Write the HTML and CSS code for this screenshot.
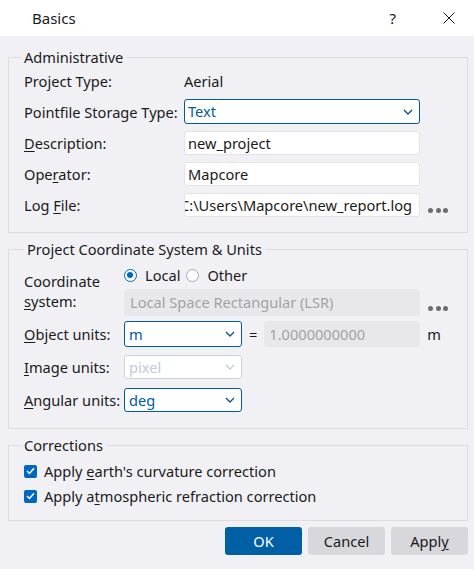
FILE: index.html
```html
<!DOCTYPE html>
<html>
<head>
<meta charset="utf-8">
<link rel="stylesheet" href="styles.css">
</head>
<body>
<div class="dialog">
  <div class="titlebar">
    <span class="title">Basics</span>
    <span class="help">?</span>
    <svg class="close" width="12" height="12" viewBox="0 0 12 12"><path d="M0.5 0.5 L11.5 11.5 M11.5 0.5 L0.5 11.5" stroke="#1a1a1a" stroke-width="1" fill="none"/></svg>
  </div>
  <div class="content">
    <fieldset class="group g1">
      <legend>Administrative</legend>
      <div class="grid1">
        <div class="label first">Project Type:</div>
        <div class="value first">Aerial</div>
        <div></div>

        <div class="label">Pointfile Storage Type:</div>
        <div class="combo"><span>Text</span><svg class="chev" width="10" height="6" viewBox="0 0 10 6"><path d="M1 1 L5 5 L9 1" stroke="#1d4f86" stroke-width="1.4" fill="none"/></svg></div>
        <div></div>

        <div class="label"><u>D</u>escription:</div>
        <div class="field">new_project</div>
        <div></div>

        <div class="label">Ope<u>r</u>ator:</div>
        <div class="field">Mapcore</div>
        <div></div>

        <div class="label">Log <u>F</u>ile:</div>
        <div class="field clip"><span class="shift">C:\Users\Mapcore\new_report.log</span></div>
        <div class="dots"><i></i><i></i><i></i></div>
      </div>
    </fieldset>

    <fieldset class="group g2">
      <legend>Project Coordinate System &amp; Units</legend>
      <div class="grid2">
        <div class="label coord">Coordinate<br><u>s</u>ystem:</div>
        <div class="radios">
          <span class="radio on"></span><span class="rtext">Local</span>
          <span class="radio"></span><span class="rtext">Other</span>
        </div>
        <div class="lsr-row">
          <div class="field disabled lsr">Local Space Rectangular (LSR)</div>
          <div class="dots"><i></i><i></i><i></i></div>
        </div>

        <div class="label l26"><u>O</u>bject units:</div>
        <div class="unit-row">
          <div class="combo small obj"><span>m</span><svg class="chev" width="10" height="6" viewBox="0 0 10 6"><path d="M1 1 L5 5 L9 1" stroke="#1d4f86" stroke-width="1.4" fill="none"/></svg></div>
          <span class="eq">=</span>
          <div class="field disabled factor">1.0000000000</div>
          <span class="unit">m</span>
        </div>

        <div class="label l24"><u>I</u>mage units:</div>
        <div class="unit-row">
          <div class="combo small off"><span>pixel</span><svg class="chev" width="10" height="6" viewBox="0 0 10 6"><path d="M1 1 L5 5 L9 1" stroke="#c5ccd6" stroke-width="1.4" fill="none"/></svg></div>
        </div>

        <div class="label l24"><u>A</u>ngular units:</div>
        <div class="unit-row">
          <div class="combo small"><span>deg</span><svg class="chev" width="10" height="6" viewBox="0 0 10 6"><path d="M1 1 L5 5 L9 1" stroke="#1d4f86" stroke-width="1.4" fill="none"/></svg></div>
        </div>
      </div>
    </fieldset>

    <fieldset class="group g3">
      <legend>Corrections</legend>
      <div class="checks">
        <div class="check"><span class="box"><svg width="9" height="8" viewBox="0 0 9 8"><path d="M1 4 L3.5 6.5 L8 1.2" stroke="#fff" stroke-width="1.5" fill="none"/></svg></span><span>Apply <u>e</u>arth's curvature correction</span></div>
        <div class="check"><span class="box"><svg width="9" height="8" viewBox="0 0 9 8"><path d="M1 4 L3.5 6.5 L8 1.2" stroke="#fff" stroke-width="1.5" fill="none"/></svg></span><span>Apply a<u>t</u>mospheric refraction correction</span></div>
      </div>
    </fieldset>

    <div class="buttons">
      <button class="btn primary">OK</button>
      <button class="btn">Cancel</button>
      <button class="btn">Appl<u>y</u></button>
    </div>
  </div>
</div>
</body>
</html>
```

FILE: styles.css
```css
* { box-sizing: border-box; }
html, body { margin: 0; padding: 0; }
body {
  width: 474px;
  height: 569px;
  background: #f1f1f5;
  font-family: "Noto Sans", "Open Sans", sans-serif;
  font-size: 14.6px;
  color: #1a1a1a;
  overflow: hidden;
}
u { text-decoration: underline; text-underline-offset: 2px; text-decoration-thickness: 1px; }

.titlebar {
  height: 36px;
  background: #ffffff;
  display: flex;
  align-items: center;
  padding-left: 32px;
}
.title { font-size: 15px; flex: 1; }
.help { font-size: 15px; margin-right: 47px; }
.close { margin-right: 19px; }

.content { padding: 0 6px 0 8px; }

.group {
  margin: 0;
  border: 1px solid #dcdce2;
  padding: 0 15px;
  min-width: 0;
}
.group legend {
  padding: 0 3px;
  margin-left: -3px;
  line-height: 20px;
}
.g1 { margin-top: 11px; padding-top: 4px; padding-bottom: 15px; }
.g2 { margin-top: 6px; padding-top: 6px; padding-bottom: 16px; }
.g2 legend { margin-left: 0; }
.g3 { margin-top: 6px; padding-top: 6px; padding-bottom: 14px; }

.grid1 {
  display: grid;
  grid-template-columns: 160px 236px 1fr;
  row-gap: 7px;
  align-items: center;
}
.label { line-height: 20px; white-space: nowrap; }
.first { height: 21px; line-height: 21px; }

.field {
  height: 24px;
  background: #ffffff;
  border: 1px solid #e3e3e8;
  border-radius: 3px;
  padding: 0 3px;
  line-height: 22px;
  white-space: nowrap;
  overflow: hidden;
}
.clip { padding: 0; }
.shift { display: inline-block; margin-left: -5px; }
.disabled { background: #e8e8ec; border-color: #e8e8ec; color: #a2a2a6; }

.combo {
  height: 25px;
  background: #ffffff;
  border: 1px solid #005a9e;
  border-radius: 3px;
  padding: 0 6px 0 3px;
  display: flex;
  align-items: center;
  color: #005a9e;
  line-height: 23px;
}
.combo span { flex: 1; }
.combo.off { border-color: #c9d2dd; color: #c2cad6; }

.dots {
  display: flex;
  gap: 2.5px;
  align-self: end;
  margin-left: 8px;
  margin-bottom: 4px;
}
.dots i {
  display: block;
  width: 5px;
  height: 5px;
  border-radius: 50%;
  background: #6c6c70;
}
.lsr-row .dots { margin-bottom: 5px; }

.grid2 {
  display: grid;
  grid-template-columns: 100px 1fr;
  grid-template-rows: 20px 31px 31px 32px 33px;
  align-items: end;
}
.coord { grid-row: 1 / span 2; align-self: start; padding-top: 6px; }
.l26 { height: 26px; line-height: 26px; }
.l24 { height: 24px; line-height: 24px; }
.radios { display: flex; align-items: center; align-self: center; }
.radio {
  width: 13px; height: 13px;
  border-radius: 50%;
  border: 1px solid #a8a8ac;
  background: #fff;
  margin-right: 8px;
  position: relative;
}
.radio.on { border: 1.5px solid #0067c0; }
.radio.on::after {
  content: "";
  position: absolute;
  left: 2px; top: 2px;
  width: 6px; height: 6px;
  border-radius: 50%;
  background: #0067c0;
}
.rtext { margin-right: 6px; }
.lsr-row { display: flex; align-items: center; }
.lsr { width: 296px; height: 27px; line-height: 25px; padding-left: 5px; }

.unit-row { display: flex; align-items: center; }
.small { width: 118px; padding-left: 4px; height: 24px; line-height: 22px; }
.obj { height: 26px; }
.eq { margin: 0 7px 0 7px; }
.factor { width: 156px; height: 26px; line-height: 24px; padding-left: 4px; }
.unit { margin-left: 7px; }

.checks { display: flex; flex-direction: column; gap: 5px; }
.check { display: flex; align-items: center; line-height: 20px; }
.box {
  width: 13px; height: 13px;
  background: #0067c0;
  border-radius: 2px;
  margin-right: 7px;
  display: flex; align-items: center; justify-content: center;
}

.buttons {
  display: flex;
  justify-content: flex-end;
  gap: 6px;
  margin-top: 6px;
}
.btn {
  width: 77px;
  height: 28px;
  border: none;
  border-radius: 3px;
  background: #d7d7dc;
  font-family: inherit;
  font-size: 14.6px;
  color: #1a1a1a;
  padding: 0;
}
.btn.primary { background: #005fa5; color: #ffffff; }
```
